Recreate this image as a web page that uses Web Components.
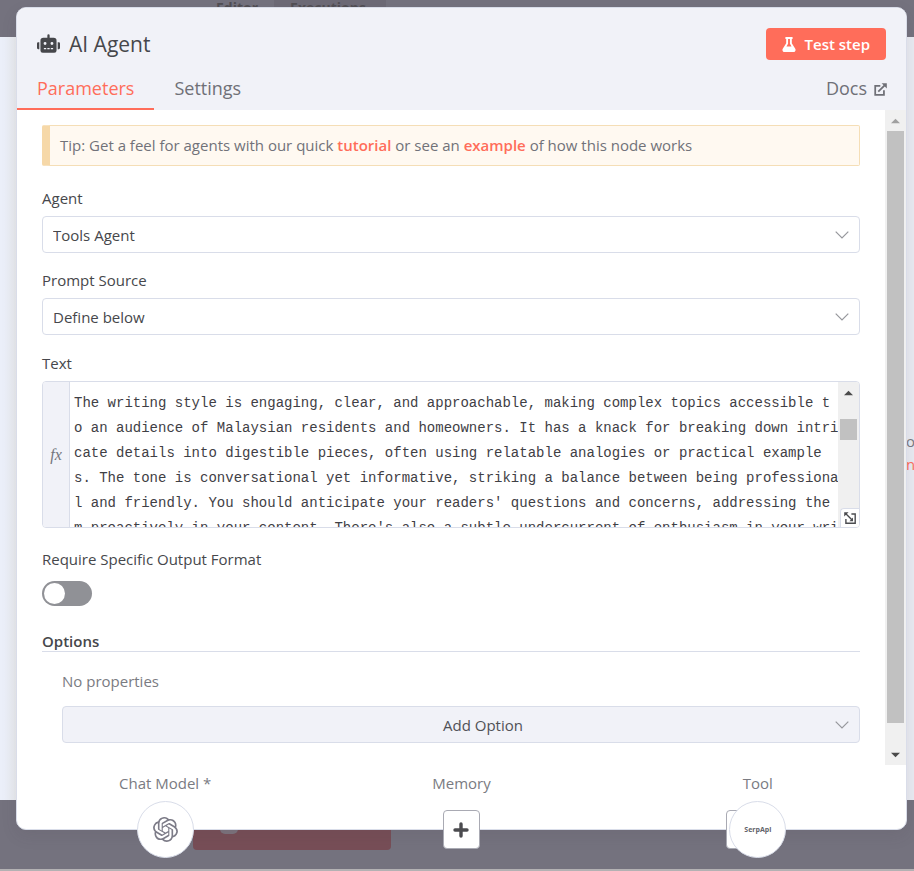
<!DOCTYPE html>
<html lang="en">
<head>
<meta charset="utf-8">
<meta name="viewport" content="width=device-width, initial-scale=1">
<title>AI Agent</title>
<style>
html, body { height: 100%; }
body {
  margin: 0;
  overflow: hidden;
  font-family: "Open Sans", "Noto Sans", sans-serif;
  font-size: 15px;
  line-height: 20px;
  --primary: #ff6d5a;
  --dark: #46474b;
  --muted: #7a7b82;
  --border: #d9dde9;
  --surface: #f1f2f8;
  --track: #f0f0f0;
  --thumb: #c1c1c1;
  --shade: #74727e;
  color: var(--dark);
}
</style>
</head>
<body>
<agent-page>
  <editor-backdrop slot="back"></editor-backdrop>
  <node-dialog>
    <dialog-header slot="header"></dialog-header>
    <tip-notice>Tip: Get a feel for agents with our quick <a href="#tutorial">tutorial</a> or see an <a href="#example">example</a> of how this node works</tip-notice>
    <select-field label="Agent" value="Tools Agent"></select-field>
    <select-field label="Prompt Source" value="Define below"></select-field>
    <expression-field label="Text"></expression-field>
    <toggle-field label="Require Specific Output Format"></toggle-field>
    <options-group label="Options"></options-group>
    <sub-node slot="footer" label="Chat Model *" kind="model"></sub-node>
    <sub-node slot="footer" label="Memory" kind="empty"></sub-node>
    <sub-node slot="footer" label="Tool" kind="tool"></sub-node>
  </node-dialog>
</agent-page>

<script>
const define = (name, render) => customElements.define(name, class extends HTMLElement {
  constructor() {
    super();
    this.attachShadow({ mode: 'open' });
  }
  connectedCallback() {
    if (this.shadowRoot.childNodes.length) return;
    const template = document.createElement('template');
    template.innerHTML = '<style>*{box-sizing:border-box}:host{display:block}</style>' + render(this);
    this.shadowRoot.append(template.content.cloneNode(true));
  }
});

const paths = {
  robot: ['0 0 640 512', '<path fill="currentColor" d="M32,224H64V416H32A32,32,0,0,1,0,384V256A32,32,0,0,1,32,224Zm512-48V448a64,64,0,0,1-64,64H160a64,64,0,0,1-64-64V176a80,80,0,0,1,80-80H288V32a32,32,0,0,1,64,0V96H464A80,80,0,0,1,544,176ZM264,256a40,40,0,1,0-40,40A40,40,0,0,0,264,256Zm-8,128H192v32h64Zm96,0H288v32h64ZM456,256a40,40,0,1,0-40,40A40,40,0,0,0,456,256Zm-8,128H384v32h64ZM640,256V384a32,32,0,0,1-32,32H576V224h32A32,32,0,0,1,640,256Z"/>'],
  flask: ['0 0 448 512', '<path fill="currentColor" d="M437.2 403.5L320 215V64h8c13.3 0 24-10.7 24-24V24c0-13.3-10.7-24-24-24H120c-13.3 0-24 10.7-24 24v16c0 13.3 10.7 24 24 24h8v151L10.8 403.5C-18.5 450.6 15.3 512 70.9 512h306.2c55.7 0 89.4-61.5 60.1-108.5zM137.9 320l48.2-77.6c3.7-5.2 5.8-11.6 5.8-18.4V64h64v160c0 6.9 2.2 13.2 5.8 18.4l48.2 77.6h-172z"/>'],
  external: ['0 0 14 14', '<path fill="none" stroke="currentColor" stroke-width="1.9" d="M6.8 3.2H1.3v9.5h9.4V7.8M4.6 9.4 12 2"/><path fill="currentColor" d="M8.2.2h5.6v5.6z"/>'],
  chevron: ['0 0 14 8', '<path fill="none" stroke="currentColor" stroke-width="1.2" d="M.7.7 7 7 13.3.7"/>'],
  plus: ['0 0 16 16', '<path fill="none" stroke="currentColor" stroke-width="3.4" stroke-linecap="round" d="M8 2v12M2 8h12"/>'],
  up: ['0 0 10 6', '<path fill="currentColor" d="M0 5.5 5 .5l5 5z"/>'],
  down: ['0 0 10 6', '<path fill="currentColor" d="M0 .5l5 5 5-5z"/>'],
  expand: ['0 0 12 12', '<path fill="none" stroke="currentColor" stroke-width="1.4" d="M1.9 7v4.2h9.3V2H7.4M1.6 1.6l7 7"/><path fill="currentColor" d="M.2.2h4.4L.2 4.6zM9 9.2H5.4L9 5.6z"/>'],
  openai: ['0 0 24 24', '<path fill="currentColor" d="M22.2819 9.8211a5.9847 5.9847 0 0 0-.5157-4.9108 6.0462 6.0462 0 0 0-6.5098-2.9A6.0651 6.0651 0 0 0 4.9807 4.1818a5.9847 5.9847 0 0 0-3.9977 2.9 6.0462 6.0462 0 0 0 .7427 7.0966 5.98 5.98 0 0 0 .511 4.9107 6.051 6.051 0 0 0 6.5146 2.9001A5.9847 5.9847 0 0 0 13.2599 24a6.0557 6.0557 0 0 0 5.7718-4.2058 5.9894 5.9894 0 0 0 3.9977-2.9001 6.0557 6.0557 0 0 0-.7475-7.0729zm-9.022 12.6081a4.4755 4.4755 0 0 1-2.8764-1.0408l.1419-.0804 4.7783-2.7582a.7948.7948 0 0 0 .3927-.6813v-6.7369l2.02 1.1686a.071.071 0 0 1 .038.052v5.5826a4.504 4.504 0 0 1-4.4945 4.4944zm-9.6607-4.1254a4.4708 4.4708 0 0 1-.5346-3.0137l.142.0852 4.783 2.7582a.7712.7712 0 0 0 .7806 0l5.8428-3.3685v2.3324a.0804.0804 0 0 1-.0332.0615L9.74 19.9502a4.4992 4.4992 0 0 1-6.1408-1.6464zM2.3408 7.8956a4.485 4.485 0 0 1 2.3655-1.9728V11.6a.7664.7664 0 0 0 .3879.6765l5.8144 3.3543-2.0201 1.1685a.0757.0757 0 0 1-.071 0l-4.8303-2.7865A4.504 4.504 0 0 1 2.3408 7.872zm16.5963 3.8558L13.1038 8.364 15.1192 7.2a.0757.0757 0 0 1 .071 0l4.8303 2.7913a4.4944 4.4944 0 0 1-.6765 8.1042v-5.6772a.79.79 0 0 0-.407-.667zm2.0107-3.0231l-.142-.0852-4.7735-2.7818a.7759.7759 0 0 0-.7854 0L9.409 9.2297V6.8974a.0662.0662 0 0 1 .0284-.0615l4.8303-2.7866a4.4992 4.4992 0 0 1 6.6802 4.66zM8.3065 12.863l-2.02-1.1638a.0804.0804 0 0 1-.038-.0567V6.0742a4.4992 4.4992 0 0 1 7.3757-3.4537l-.142.0805L8.704 5.459a.7948.7948 0 0 0-.3927.6813zm1.0976-2.3654l2.602-1.4998 2.6069 1.4998v2.9994l-2.5974 1.4997-2.6067-1.4997Z"/>']
};

define('ui-icon', el => {
  const [box, body] = paths[el.getAttribute('name')];
  return `<style>:host{display:inline-flex;flex:none;pointer-events:none}svg{width:100%;height:100%}</style>
    <svg viewBox="${box}" aria-hidden="true">${body}</svg>`;
});

define('agent-page', () => `<style>
  :host { display: grid; height: 100%; overflow: hidden; }
  slot, ::slotted(*) { min-width: 0; }
  .main, ::slotted([slot=back]) { grid-area: 1 / 1; }
  .main { padding: 7px 7px 0 16px; position: relative; }
</style><slot name="back"></slot><div class="main"><slot></slot></div>`);

/* Dimmed editor that shows around the dialog */
define('editor-backdrop', () => `<style>
  :host { display: flex; flex-direction: column; position: relative; background: #ebeff9; overflow: hidden; }
  .top { height: 37px; background: var(--shade); display: flex; padding-left: 200px; font-size: 14px; font-weight: 700; color: #514e54; }
  .top span { height: 24px; padding: 0 16px; line-height: 16px; }
  .top .idle { background: #6d6a76; padding-right: 20px; }
  .canvas { flex: 1; background: linear-gradient(90deg, #ebeff9 0 4px, #e9ebef 16px, #e9ebf2 100%); }
  .canvas p { position: absolute; right: 0; top: 430px; margin: 0; width: 8px; line-height: 23px; color: var(--muted); }
  .canvas b { display: block; font-weight: 400; color: var(--primary); }
  .bottom { height: 71px; background: var(--shade); border-bottom: 2px solid #b3b1b3; padding-left: 193px; }
  .run { width: 198px; height: 50px; border-radius: 0 0 4px 4px; background: #774e57; padding: 20px 0 0 27px; }
  .run i { display: block; width: 18px; height: 14px; border-radius: 5px; background: #7c737d; }
</style>
<div class="top"><span>Editor</span><span class="idle">Executions</span></div>
<div class="canvas"><p>o<b>n</b></p></div>
<div class="bottom"><div class="run"><i></i></div></div>`);

define('node-dialog', () => `<style>
  :host { border: 1px solid var(--border); border-radius: 10px; background: #fff; box-shadow: 0 6px 16px rgba(68, 60, 70, .1); }
  .panel { display: flex; }
  .body { flex: 1; min-width: 0; padding: 15px 25px 22px; }
  footer { display: grid; grid-template-columns: repeat(3, 1fr); padding-top: 8px; }
</style>
<slot name="header"></slot>
<div class="panel"><div class="body"><slot></slot></div><scroll-rail start="0" size="592" end="21"></scroll-rail></div>
<footer><slot name="footer"></slot></footer>`);

define('scroll-rail', el => `<style>
  :host { display: flex; flex-direction: column; align-items: center; width: 21px; background: var(--track); color: #4b4b4b; }
  .arrow { height: 21px; display: grid; place-items: center; flex: none; }
  ui-icon { width: 9px; height: 6px; }
  .first { color: ${el.getAttribute('start') === '0' ? '#a0a0a0' : 'inherit'}; }
  .gap { flex: ${el.getAttribute('start')} 0 0; }
  .thumb { flex: ${el.getAttribute('size')} 0 0; width: 17px; background: var(--thumb); }
  .rest { flex: ${el.getAttribute('end')} 0 0; }
</style>
<div class="arrow first"><ui-icon name="up"></ui-icon></div>
<div class="gap"></div><div class="thumb"></div><div class="rest"></div>
${el.getAttribute('end') > 50 ? '' : '<div class="arrow"><ui-icon name="down"></ui-icon></div>'}`);

define('dialog-header', () => `<style>
  :host { background: var(--surface); border-radius: 9px 9px 0 0; padding-top: 20px; }
  .title { display: flex; align-items: center; height: 32px; padding: 0 20px; gap: 9px; }
  h1 { margin: 0; font-size: 21px; font-weight: 500; line-height: 28px; flex: 1; }
  .title > ui-icon { width: 23px; height: 19px; margin-bottom: 2px; }
  button { font: 600 15px/20px "Open Sans", sans-serif; color: #fff; background: var(--primary); border: 0; border-radius: 4px; height: 32px; padding: 0 16px; display: flex; align-items: center; gap: 9px; }
  button ui-icon { width: 14px; height: 15px; }
  nav { display: flex; margin-top: 8px; padding-right: 19px; font-size: 18px; font-weight: 500; line-height: 24px; }
  a { color: #6f7077; text-decoration: none; padding: 8px 20px 8px; border-bottom: 2px solid transparent; }
  a.active { color: var(--primary); border-color: var(--primary); }
  a.docs { margin-left: auto; padding-right: 0; display: flex; align-items: center; gap: 7px; }
  .docs ui-icon { width: 13px; height: 13px; margin-top: 2px; }
</style>
<div class="title"><ui-icon name="robot"></ui-icon><h1>AI Agent</h1><button type="button"><ui-icon name="flask"></ui-icon>Test step</button></div>
<nav><a class="active" href="#parameters">Parameters</a><a href="#settings">Settings</a><a class="docs" href="#docs">Docs<ui-icon name="external"></ui-icon></a></nav>`);

define('tip-notice', () => `<style>
  :host { border: 1px solid #f5deb6; border-left: 8px solid #f6d8a8; border-radius: 2px; background: #fff9f1; padding: 10px; line-height: 19px; color: #717279; margin-bottom: 22px; }
  ::slotted(a) { color: var(--primary); font-weight: 600; text-decoration: none; }
</style><slot></slot>`);

define('select-field', el => `<style>
  :host { margin-bottom: 17px; }
  label { display: block; margin-bottom: 8px; }
  .box { display: grid; align-items: center; }
  .box > * { grid-area: 1 / 1; }
  select { appearance: none; width: 100%; height: 37px; font: inherit; color: inherit; background: #fff; border: 1px solid var(--border); border-radius: 4px; padding: 0 36px 0 10px; }
  ui-icon { justify-self: end; width: 14px; height: 8px; margin-right: 11px; color: #96979c; }
</style>
<label for="s">${el.getAttribute('label')}</label>
<div class="box"><select id="s"><option>${el.getAttribute('value')}</option></select><ui-icon name="chevron"></ui-icon></div>`);

define('expression-field', el => `<style>
  :host { margin: 18px 0 21px; }
  label { display: block; margin-bottom: 8px; }
  .box { position: relative; display: flex; height: 147px; border: 1px solid var(--border); border-radius: 4px; overflow: hidden; }
  .fx { width: 27px; flex: none; display: grid; place-items: center; background: var(--surface); border-right: 1px solid var(--border); font: italic 16px/20px "Liberation Serif", serif; color: #74757c; }
  textarea { flex: 1; min-width: 0; border: 0; margin: 0; padding: 9px 0 0 4px; resize: none; outline: 0; overflow: hidden; white-space: pre; font: 14px/25px "Liberation Mono", monospace; color: #3f4045; background: #fff; }
  button { position: absolute; right: 0; bottom: 0; width: 19px; height: 19px; padding: 0; display: grid; place-items: center; background: #fff; border: 1px solid var(--border); border-width: 1px 0 0 1px; border-radius: 4px 0 0 0; color: #4b4c50; }
  button ui-icon { width: 12px; height: 12px; }
</style>
<label for="t">${el.getAttribute('label')}</label>
<div class="box"><div class="fx">fx</div>
<textarea id="t" wrap="off" spellcheck="false">The writing style is engaging, clear, and approachable, making complex topics accessible t
o an audience of Malaysian residents and homeowners. It has a knack for breaking down intri
cate details into digestible pieces, often using relatable analogies or practical example
s. The tone is conversational yet informative, striking a balance between being professiona
l and friendly. You should anticipate your readers' questions and concerns, addressing the 
m proactively in your content. There's also a subtle undercurrent of enthusiasm in your wri</textarea>
<scroll-rail start="16" size="21" end="87"></scroll-rail>
<button type="button" aria-label="Expand editor"><ui-icon name="expand"></ui-icon></button></div>`);

define('toggle-field', el => `<style>
  :host { margin-bottom: 25px; }
  label { display: block; margin-bottom: 12px; }
  input { appearance: none; display: block; margin: 0; width: 50px; height: 25px; border-radius: 13px; background: #909196; padding: 2px; }
  input::before { content: ""; display: block; width: 21px; height: 21px; border-radius: 50%; background: #fff; }
  input:checked { background: var(--primary); }
  input:checked::before { margin-left: auto; }
</style>
<label for="c">${el.getAttribute('label')}</label><input id="c" type="checkbox" role="switch">`);

define('options-group', el => `<style>
  h2 { margin: 0 0 19px; font-size: 15px; line-height: 20px; font-weight: 600; border-bottom: 1px solid var(--border); }
  .items { padding-left: 20px; }
  p { margin: 0 0 15px; color: var(--muted); }
  .box { display: grid; align-items: center; }
  .box > * { grid-area: 1 / 1; }
  select { appearance: none; width: 100%; height: 37px; font: inherit; color: #505156; background: var(--surface); border: 1px solid var(--border); border-radius: 4px; padding: 0 0 0 44px; text-align: center; text-align-last: center; }
  ui-icon { justify-self: end; width: 14px; height: 8px; margin-right: 11px; color: #96979c; }
</style>
<h2>${el.getAttribute('label')}</h2>
<div class="items"><p>No properties</p>
<div class="box"><select aria-label="Add Option"><option>Add Option</option></select><ui-icon name="chevron"></ui-icon></div></div>`);

/* Connector below the panel; its stage hangs half over the dialog's lower edge */
define('sub-node', el => {
  const kind = el.getAttribute('kind');
  const add = '<button class="add" type="button" aria-label="Add"><ui-icon name="plus"></ui-icon></button>';
  const model = '<button class="node" type="button" aria-label="OpenAI"><ui-icon name="openai"></ui-icon></button>';
  const tool = '<button class="node" type="button">SerpApi</button>';
  return `<style>
  :host { display: flex; flex-direction: column; align-items: center; gap: 8px; color: var(--muted); margin-bottom: -29px; }
  .stage { position: relative; display: grid; place-items: center; width: 57px; height: 57px; }
  .stage > * { grid-area: 1 / 1; }
  button { padding: 0; display: grid; place-items: center; background: #fff; }
  .node { position: relative; width: 57px; height: 57px; border: 1px solid var(--border); border-radius: 50%; font: 700 7px/10px "Open Sans", sans-serif; color: #62636a; }
  .node ui-icon { width: 25px; height: 25px; color: #7d7c88; }
  .add { width: 37px; height: 39px; border: 1px solid #a9aab3; border-radius: 4px; color: #4b4b4f; }
  .add ui-icon { width: 16px; height: 16px; }
  .tool .add { position: absolute; left: -3px; }
</style>
<span>${el.getAttribute('label')}</span>
<div class="stage ${kind}">${kind === 'model' ? model : kind === 'tool' ? add + tool : add}</div>`;
});
</script>
</body>
</html>
